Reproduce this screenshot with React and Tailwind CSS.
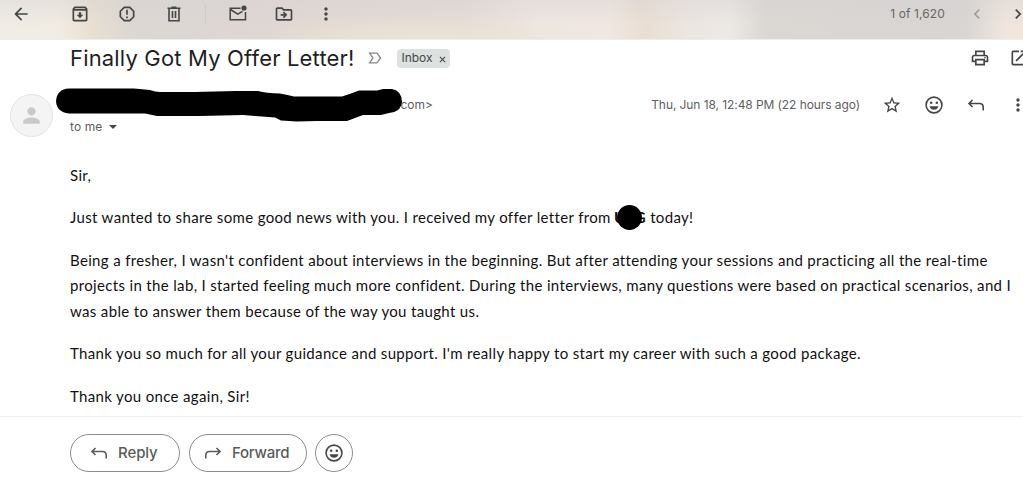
import {
  MdArrowBack,
  MdChevronLeft,
  MdChevronRight,
  MdMoreVert,
  MdOpenInNew,
  MdOutlineArchive,
  MdOutlineDriveFileMove,
  MdOutlinePrint,
  MdPerson,
  MdReportGmailerrorred,
  MdStarBorder,
} from "react-icons/md";

const PARAGRAPHS = [
  ["Being a fresher, I wasn't confident about interviews in the beginning. But after attending your sessions and practicing all the real-time",
    "projects in the lab, I started feeling much more confident. During the interviews, many questions were based on practical scenarios, and I",
    "was able to answer them because of the way you taught us."],
  ["Thank you so much for all your guidance and support. I'm really happy to start my career with such a good package."],
  ["Thank you once again, Sir!"],
];

export default function App() {
  return (
    <div className="w-[1023px] h-[478px] overflow-hidden bg-white font-['Inter',sans-serif] text-[#444746]">
      <Toolbar />
      <SubjectRow />
      <SenderRow />
      <MessageBody />
      <ReplyBar />
    </div>
  );
}

function Toolbar() {
  return (
    <header className="flex h-10 items-start border-b border-[#efedeb] pt-1 bg-[radial-gradient(ellipse_170px_26px_at_430px_40px,#ede4d7,transparent),linear-gradient(to_bottom,rgba(214,209,212,0.4),rgba(214,209,212,0)_70%),linear-gradient(to_right,#f1ede6_0px,#f1ece3_60px,#e9e0d2_90px,#dcd7d3_130px,#ddd6d3_220px,#e3d9d3_320px,#e3dbd5_460px,#efe7e2_540px,#f0e7e1_610px,#eaded3_645px,#ece6e1_690px,#ede9e5_730px,#dbd7d3_765px,#d8d5d2_965px,#f0e6de_1005px)]">
      <MdArrowBack size={20} className="ml-[11px] shrink-0" />
      <MdOutlineArchive size={20} className="ml-[39px] shrink-0" />
      <MdReportGmailerrorred size={20} className="ml-[27px] shrink-0" />
      <TrashIcon className="ml-[27px] size-5 shrink-0" />
      <div className="ml-[21px] h-5 w-px shrink-0 bg-[#cfcbc8]" />
      <UnreadIcon className="ml-[22px] size-5 shrink-0" />
      <MdOutlineDriveFileMove size={20} className="ml-[26px] shrink-0" />
      <MdMoreVert size={20} className="ml-[22px] shrink-0" />
      <span className="ml-auto mr-[22px] text-[12px] leading-5 tracking-[0.12px] text-[#666] whitespace-nowrap">
        1 of 1,620
      </span>
      <MdChevronLeft size={20} className="mr-[21px] shrink-0 text-[#a19e9c]" />
      <MdChevronRight size={20} className="-mr-[5px] shrink-0" />
    </header>
  );
}

function SubjectRow() {
  return (
    <div className="flex h-9 items-center pl-[70px]">
      <h1 className="w-[285px] text-[22px] leading-7 tracking-[0.17px] text-[#1f1f1f] whitespace-nowrap">
        Finally Got My Offer Letter!
      </h1>
      <svg viewBox="0 0 14 12" className="ml-[13px] h-3 w-3.5 shrink-0" fill="none" stroke="#858786" strokeWidth="1.3">
        <path d="M1.6 1.2H9L12.6 6L9 10.8H1.6L5 6Z" />
      </svg>
      <span className="ml-[15px] flex h-[19px] w-[53px] shrink-0 items-center justify-center gap-[6px] rounded bg-[#dde1df] text-[12px]">
        Inbox
        <svg viewBox="0 0 8 8" className="mt-0.5 size-[7px]" stroke="currentColor" strokeWidth="1.2">
          <path d="M1 1L7 7M7 1L1 7" />
        </svg>
      </span>
      <MdOutlinePrint size={20} className="ml-auto mr-[19px] shrink-0" />
      <MdOpenInNew size={20} className="-mr-[6px] shrink-0" />
    </div>
  );
}

function SenderRow() {
  return (
    <div className="relative flex h-[70px] pl-[10px]">
      <div className="mt-[18px] flex size-[43px] shrink-0 items-center justify-center rounded-full border border-[#e3e3e3] bg-[#f4f4f4] text-[#c9c9c9]">
        <MdPerson size={25} />
      </div>
      <div className="ml-[17px] w-[363px] shrink-0 pt-[19px] text-[12px] leading-5 text-[#5e5e5e]">
        <p className="text-right tracking-[0px]">.com&gt;</p>
        <p className="mt-[1.5px] flex items-center gap-[7px] tracking-[0.1px] text-[#5e5e5e]">
          to me
          <svg viewBox="0 0 8 4" className="h-1 w-2" fill="#444746">
            <path d="M0 0H8L4 4Z" />
          </svg>
        </p>
      </div>
      {/* marker stroke over the sender's name */}
      <svg
        viewBox="56 86 348 38"
        className="absolute left-[56px] top-[10px] h-[38px] w-[348px]"
        fill="#000"
      >
        <path d="M69 88.5H134L150 90Q155 92 160 92H195L235 91H258Q266 93 280 93.500Q288 95 294 96.500H342L351 93.500L359 90.500H377L383 89H392Q402 91 402 102Q401 112 389 113L381 115H363L347 121H317L297 121.500L281 120.500L275 117.500L255 116L243 115L200 116H157L145 113.500H69Q56.500 112 56 101Q57 89 69 88.500Z" />
      </svg>
      <div className="ml-auto flex h-5 items-center mt-[19px]">
        <span className="mr-[22px] text-[12px] tracking-[-0.08px] text-[#5e5e5e] whitespace-nowrap">
          Thu, Jun 18, 12:48 PM (22 hours ago)
        </span>
        <MdStarBorder size={20} className="mr-[22px] shrink-0" />
        <SmileIcon className="mr-[22px] size-5 shrink-0" />
        <ReplyIcon className="mr-[22px] size-5 shrink-0" />
        <MdMoreVert size={20} className="-mr-[5px] shrink-0" />
      </div>
    </div>
  );
}

function MessageBody() {
  return (
    <main className="flex h-[271px] flex-col gap-[17px] border-b border-[#eceff1] pl-[70px] pt-[16.9px] font-['Lato',sans-serif] text-[15px] leading-[25.5px] tracking-[0.34px] text-[#111] whitespace-nowrap">
      <p>Sir,</p>
      <p>
        Just wanted to share some good news with you. I received my offer letter from{" "}
        <b className="relative -ml-px inline-block w-[32px]">
          U<span className="absolute right-0">G</span>
          <span className="absolute left-[3px] top-0 size-[25px] rounded-full bg-black" />
        </b>{" "}
        today!
      </p>
      {PARAGRAPHS.map((lines) => (
        <p key={lines[0]}>
          {lines.map((line) => (
            <span key={line} className="block">{line}</span>
          ))}
        </p>
      ))}
    </main>
  );
}

function ReplyBar() {
  return (
    <footer className="flex pl-[70px] pt-[17px] text-[15px] font-medium text-[#5a5c5b]">
      <button className="flex h-[38px] w-[110px] items-center rounded-full border border-[#8b8d8c] pl-[18px]">
        <ReplyIcon className="mr-[9px] size-5" />
        <span className="tracking-[-0.1px]">Reply</span>
      </button>
      <button className="ml-[9px] flex h-[38px] w-[118px] items-center rounded-full border border-[#8b8d8c] pl-[13px]">
        <ReplyIcon className="mr-[9px] size-5 -scale-x-100" />
        <span className="tracking-[-0.25px]">Forward</span>
      </button>
      <button className="ml-2 flex size-[38px] items-center justify-center rounded-full border border-[#8b8d8c] text-[#444746]">
        <SmileIcon className="size-5" />
      </button>
    </footer>
  );
}

function TrashIcon({ className }) {
  return (
    <svg viewBox="0 0 20 20" className={className} fill="none" stroke="currentColor" strokeWidth="1.6">
      <path d="M3.500 4.300H16.500M7.500 3.300H12.500M5 4.500V16.700H15V4.500M8.500 7V14M11.500 7V14" />
    </svg>
  );
}

function UnreadIcon({ className }) {
  return (
    <svg viewBox="0 0 20 20" className={className} fill="none" stroke="currentColor" strokeWidth="1.5">
      <path d="M12.500 4.200H2.200V15.800H17.500V8M2.500 5.500L9.800 10.200L14.500 7.300" />
      <circle cx="16" cy="4" r="2.600" fill="currentColor" stroke="none" />
    </svg>
  );
}

function SmileIcon({ className }) {
  return (
    <svg viewBox="0 0 20 20" className={className} fill="currentColor">
      <circle cx="10" cy="10" r="7.900" fill="none" stroke="currentColor" strokeWidth="1.600" />
      <circle cx="7.200" cy="7.800" r="1.250" />
      <circle cx="12.800" cy="7.800" r="1.250" />
      <path d="M5.500 11.300H14.500Q13.300 14.800 10 14.800T5.500 11.300Z" />
    </svg>
  );
}

function ReplyIcon({ className }) {
  return (
    <svg viewBox="0 0 20 20" className={className} fill="none" stroke="currentColor" strokeWidth="1.600">
      <path d="M6.500 5L3 8.500L6.500 12M3 8.500H13.500Q17.200 8.500 17.200 12.200V15.500" />
    </svg>
  );
}
